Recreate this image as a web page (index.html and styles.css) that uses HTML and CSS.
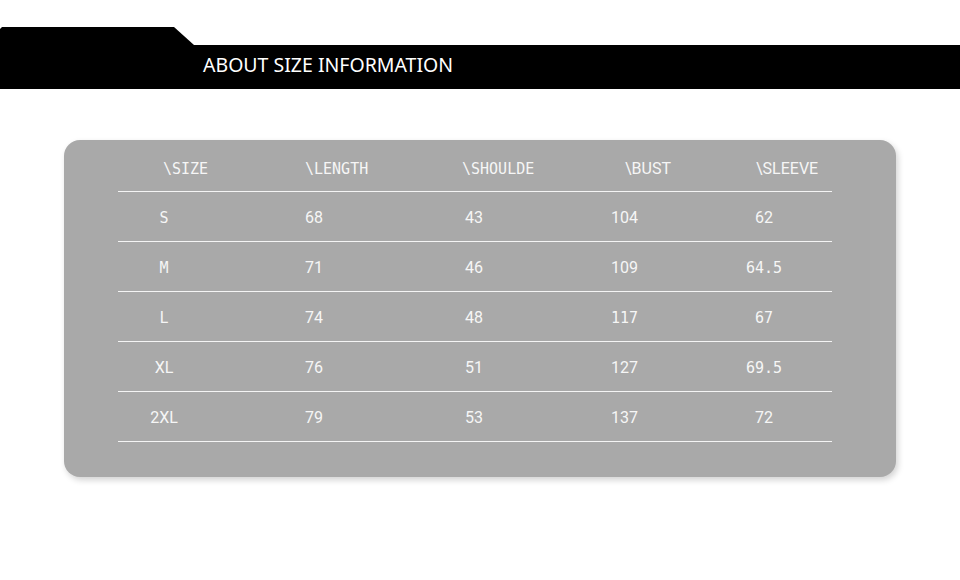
FILE: index.html
```html
<!DOCTYPE html>
<html>
<head>
<meta charset="utf-8">
<link rel="stylesheet" href="styles.css">
</head>
<body>
<header class="banner">
  <div class="tab"></div>
  <div class="bar"><h1 class="title">ABOUT SIZE INFORMATION</h1></div>
</header>
<main class="card">
  <div class="table">
    <div class="row head">
      <div class="c c1 mono">\SIZE</div>
      <div class="c c2 mono">\LENGTH</div>
      <div class="c c3 mono">\SHOULDE</div>
      <div class="c c4">\BUST</div>
      <div class="c c5">\SLEEVE</div>
    </div>
    <div class="row">
      <div class="c c1"><span class="ctr w92 mono">S</span></div>
      <div class="c c2">68</div>
      <div class="c c3">43</div>
      <div class="c c4">104</div>
      <div class="c c5"><span class="ctr w36">62</span></div>
    </div>
    <div class="row">
      <div class="c c1"><span class="ctr w92 mono">M</span></div>
      <div class="c c2">71</div>
      <div class="c c3">46</div>
      <div class="c c4">109</div>
      <div class="c c5"><span class="ctr w36 mono">64.5</span></div>
    </div>
    <div class="row">
      <div class="c c1"><span class="ctr w92 mono">L</span></div>
      <div class="c c2">74</div>
      <div class="c c3">48</div>
      <div class="c c4 mono">117</div>
      <div class="c c5"><span class="ctr w36 mono">67</span></div>
    </div>
    <div class="row">
      <div class="c c1"><span class="ctr w92">XL</span></div>
      <div class="c c2">76</div>
      <div class="c c3">51</div>
      <div class="c c4">127</div>
      <div class="c c5"><span class="ctr w36 mono">69.5</span></div>
    </div>
    <div class="row">
      <div class="c c1"><span class="ctr w92">2XL</span></div>
      <div class="c c2">79</div>
      <div class="c c3">53</div>
      <div class="c c4">137</div>
      <div class="c c5"><span class="ctr w36">72</span></div>
    </div>
  </div>
</main>
</body>
</html>
```
FILE: styles.css
```css
html, body {
  margin: 0;
  padding: 0;
  background: #ffffff;
}
body {
  width: 960px;
  height: 580px;
  overflow: hidden;
  font-family: Roboto, "Liberation Sans", sans-serif;
}
.banner {
  padding-top: 27px;
}
.tab {
  width: 194px;
  height: 18px;
  background: #000;
  clip-path: polygon(2px 0, 174px 0, 194px 100%, 0 100%, 0 2px);
}
.bar {
  height: 44px;
  box-sizing: border-box;
  background: #000;
  display: flex;
  align-items: center;
  padding-left: 203px;
  padding-bottom: 5px;
}
.title {
  margin: 0;
  color: #fff;
  font-family: "Noto Sans", sans-serif;
  font-weight: 400;
  font-size: 19.5px;
  line-height: 1;
}
.card {
  display: block;
  margin: 51px 0 0 64px;
  width: 832px;
  height: 337px;
  box-sizing: border-box;
  background: #a9a9a9;
  border-radius: 16px;
  box-shadow: 2px 3px 6px rgba(0, 0, 0, 0.18);
  padding: 1px 64px 0 54px;
}
.table {
  display: flex;
  flex-direction: column;
}
.row {
  display: grid;
  grid-template-columns: 187px 157px 149px 135px 86px;
  box-sizing: border-box;
  height: 50px;
  border-bottom: 1px solid #f4f4f4;
  align-items: center;
  color: #f6f6f6;
  font-size: 16px;
  padding-top: 3px;
}
.row.head {
  height: 51px;
  padding-top: 5px;
}
.c {
  white-space: nowrap;
  line-height: 20px;
}
.mono {
  font-family: "DejaVu Sans Mono", monospace;
  font-size: 15px;
}
.head .c1 { padding-left: 45px; }
.head .c4 { padding-left: 14px; }
.head .c5 { padding-left: 10px; }
.row:not(.head) .c3 { padding-left: 3px; }
.ctr {
  display: inline-block;
  text-align: center;
}
.w92 { width: 92px; }
.w36 { width: 36px; }
```
